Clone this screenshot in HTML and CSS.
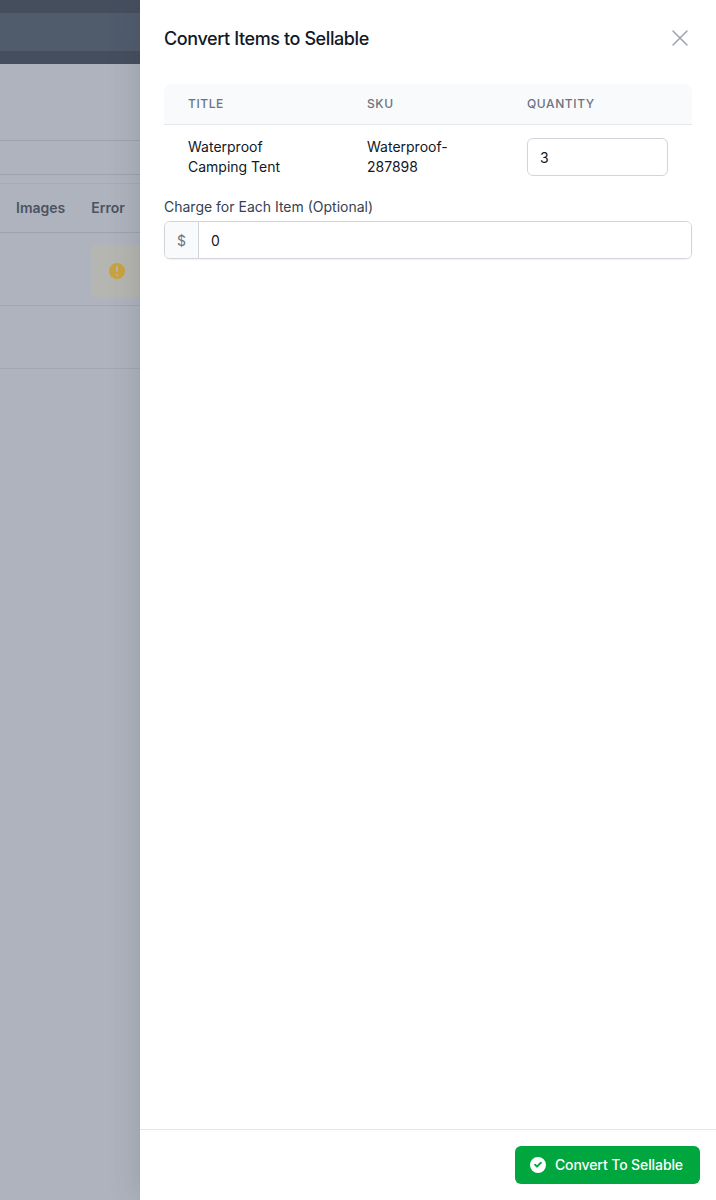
FILE: index.html
```html
<!DOCTYPE html>
<html lang="en">
<head>
    <meta charset="UTF-8">
    <meta name="viewport" content="width=device-width, initial-scale=1.0">
    <title>Convert Items to Sellable</title>
    <link rel="stylesheet" href="styles.css">
</head>
<body>
<div class="screen">
    <!-- Page behind the overlay -->
    <div class="backdrop">
        <div class="topbar"><div class="topbar-band"></div></div>
        <div class="page-head"></div>
        <div class="tab-row"></div>
        <div class="list-head">
            <span class="col-images">Images</span>
            <span class="col-error">Error</span>
        </div>
        <div class="list-row list-row-tall">
            <div class="error-cell">
                <svg class="error-icon" viewBox="0 0 20 20" fill="#c9a33f">
                    <path fill-rule="evenodd" d="M18 10a8 8 0 1 1-16 0 8 8 0 0 1 16 0zm-7 4a1 1 0 1 1-2 0 1 1 0 0 1 2 0zm-1-9a1 1 0 0 0-1 1v4a1 1 0 1 0 2 0V6a1 1 0 0 0-1-1z" clip-rule="evenodd"/>
                </svg>
            </div>
        </div>
        <div class="list-row"></div>
    </div>

    <!-- Drawer -->
    <div class="drawer">
        <div class="drawer-head">
            <h2>Convert Items to Sellable</h2>
            <svg class="close-icon" viewBox="0 0 24 24" fill="none" stroke="#9ca3af" stroke-width="1.5" stroke-linecap="round">
                <path d="M5 5l14 14M19 5L5 19"/>
            </svg>
        </div>
        <div class="drawer-body">
            <table class="items">
                <thead>
                    <tr>
                        <th class="col-title">Title</th>
                        <th class="col-sku">SKU</th>
                        <th>Quantity</th>
                    </tr>
                </thead>
                <tbody>
                    <tr>
                        <td>Waterproof Camping Tent</td>
                        <td>Waterproof-287898</td>
                        <td class="qty-cell"><input class="qty-input" type="text" value="3"></td>
                    </tr>
                </tbody>
            </table>
            <label class="field-label" for="charge">Charge for Each Item (Optional)</label>
            <div class="input-group">
                <span class="prefix">$</span>
                <input id="charge" class="charge-input" type="text" value="0">
            </div>
        </div>
        <div class="drawer-foot">
            <button class="btn" type="button">
                <svg class="btn-icon" viewBox="0 0 20 20" fill="#fff">
                    <path fill-rule="evenodd" d="M18 10a8 8 0 1 1-16 0 8 8 0 0 1 16 0zm-4.3-1.7a1 1 0 0 0-1.4-1.4L9 10.2 7.7 8.9a1 1 0 0 0-1.4 1.4l2 2a1 1 0 0 0 1.4 0l4-4z" clip-rule="evenodd"/>
                </svg>
                <span class="btn-label">Convert To Sellable</span>
            </button>
        </div>
    </div>
</div>
</body>
</html>
```

FILE: styles.css
```css
* {
    box-sizing: border-box;
}
body {
    margin: 0;
    font-family: Inter, "Liberation Sans", sans-serif;
    color: #111827;
}
.screen {
    display: flex;
    height: 1200px;
    overflow: hidden;
}

/* Dimmed page */
.backdrop {
    width: 140px;
    flex-shrink: 0;
    background-color: #aeb3bd;
    overflow: hidden;
}
.topbar {
    height: 64px;
    padding-top: 13px;
    background-color: #454e5d;
}
.topbar-band {
    height: 38px;
    background-color: #505b6c;
}
.page-head {
    height: 77px;
    border-bottom: 1px solid #9da2ad;
}
.tab-row {
    height: 34px;
    border-bottom: 1px solid #9da2ad;
}
.list-head {
    display: flex;
    align-items: center;
    height: 50px;
    margin-top: 8px;
    padding: 0 0 2px 16px;
    border-top: 1px solid #a6abb6;
    border-bottom: 1px solid #9da2ad;
    font-size: 14px;
    font-weight: 600;
    color: #4b5362;
}
.col-error {
    margin-left: 26px;
}
.list-row {
    height: 63px;
    border-bottom: 1px solid #a2a7b2;
}
.list-row-tall {
    height: 73px;
    padding: 12px 0 0 91px;
}
.error-cell {
    display: flex;
    align-items: center;
    width: 60px;
    height: 52px;
    padding-left: 17px;
    border-radius: 4px;
    background-color: #b5b6b1;
}
.error-icon {
    width: 20px;
    height: 20px;
    margin-left: -1px;
}

/* Drawer */
.drawer {
    flex: 1;
    display: flex;
    flex-direction: column;
    background-color: #fff;
    box-shadow: 0 0 30px rgba(55, 60, 75, 0.2);
    position: relative;
}
.drawer-head {
    display: flex;
    align-items: center;
    justify-content: space-between;
    height: 76px;
    padding: 0 24px;
}
.drawer-head h2 {
    margin: 1px 0 0;
    font-size: 18px;
    font-weight: 500;
    letter-spacing: -0.4px;
    line-height: 28px;
}
.close-icon {
    width: 24px;
    height: 24px;
}
.drawer-body {
    flex: 1;
    padding: 8px 24px 0;
}
.items {
    width: 100%;
    table-layout: fixed;
    border-collapse: separate;
    border-spacing: 0;
}
.items th {
    height: 41px;
    padding: 0 24px;
    background-color: #f9fafb;
    border-bottom: 1px solid #e5e7eb;
    font-size: 12px;
    font-weight: 500;
    letter-spacing: 0.05em;
    line-height: 16px;
    text-align: left;
    text-transform: uppercase;
    color: #6b7280;
}
.items th:first-child {
    border-top-left-radius: 8px;
}
.items th:last-child {
    border-top-right-radius: 8px;
}
.items .col-title {
    width: 179px;
}
.items .col-sku {
    width: 160px;
}
.items td {
    padding: 12px 24px 8px;
    font-size: 14px;
    line-height: 20px;
    vertical-align: top;
}
.items .qty-cell {
    padding-top: 13px;
}
.qty-input {
    display: block;
    width: 141px;
    height: 38px;
    padding: 0 12px;
    border: 1px solid #d1d5db;
    border-radius: 6px;
    font-family: inherit;
    font-size: 14px;
    color: #111827;
}
.field-label {
    display: block;
    margin-top: 12px;
    font-size: 14px;
    line-height: 20px;
    color: #374151;
}
.input-group {
    display: flex;
    height: 38px;
    margin-top: 4px;
    border: 1px solid #d1d5db;
    border-radius: 6px;
    box-shadow: 0 1px 2px rgba(0, 0, 0, 0.05);
    overflow: hidden;
}
.prefix {
    display: flex;
    align-items: center;
    justify-content: center;
    width: 34px;
    background-color: #f9fafb;
    border-right: 1px solid #d1d5db;
    font-size: 14px;
    color: #6b7280;
}
.charge-input {
    flex: 1;
    min-width: 0;
    padding: 0 12px;
    border: none;
    font-family: inherit;
    font-size: 14px;
    color: #111827;
}
.drawer-foot {
    display: flex;
    justify-content: flex-end;
    height: 71px;
    padding: 16px 16px 0;
    border-top: 1px solid #e5e7eb;
}
.btn {
    display: flex;
    align-items: center;
    gap: 7px;
    height: 38px;
    padding: 0 17px 0 13px;
    background-color: #00a63e;
    border: none;
    border-radius: 6px;
    font-family: inherit;
    font-size: 14px;
    font-weight: 500;
    letter-spacing: -0.1px;
    color: #fff;
}
.btn-icon {
    width: 20px;
    height: 20px;
}
.btn-label {
    padding-bottom: 1px;
}
```
